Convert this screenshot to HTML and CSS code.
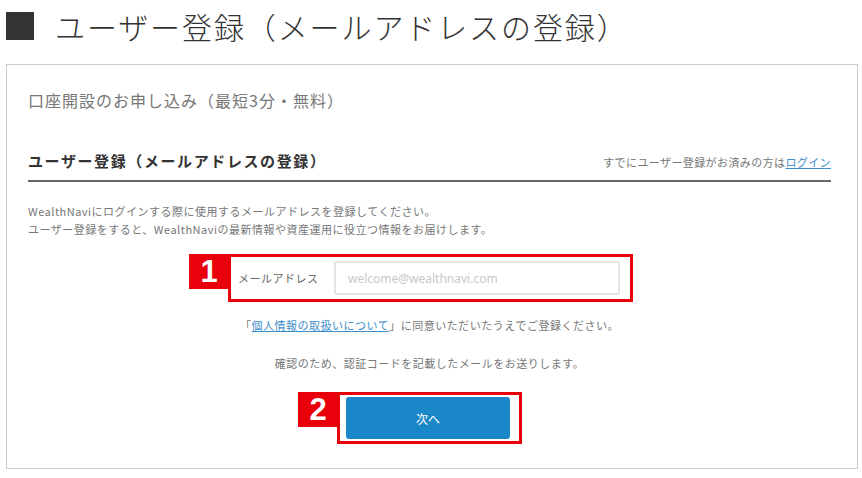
FILE: index.html
```html
<!DOCTYPE html>
<html lang="ja">
<head>
  <meta charset="UTF-8">
  <meta name="viewport" content="width=device-width, initial-scale=1.0">
  <title>ユーザー登録（メールアドレスの登録）</title>
  <link rel="stylesheet" href="styles.css">
</head>
<body>
  <h1 class="page-title"><span class="title-mark"></span>ユーザー登録（メールアドレスの登録）</h1>

  <div class="card">
    <p class="lead">口座開設のお申し込み（最短3分・無料）</p>

    <div class="section-head">
      <h2>ユーザー登録（メールアドレスの登録）</h2>
      <p class="login-note">すでにユーザー登録がお済みの方は<a href="#">ログイン</a></p>
    </div>

    <p class="intro">
      WealthNaviにログインする際に使用するメールアドレスを登録してください。<br>
      ユーザー登録をすると、WealthNaviの最新情報や資産運用に役立つ情報をお届けします。
    </p>

    <form id="signupForm">
      <div class="mark mark-field">
        <span class="badge">1</span>
        <label for="email">メールアドレス</label>
        <input type="email" id="email" placeholder="welcome@wealthnavi.com">
      </div>

      <p class="agree">「<a href="#">個人情報の取扱いについて</a>」に同意いただいたうえでご登録ください。</p>
      <p class="confirm">確認のため、認証コードを記載したメールをお送りします。</p>

      <div class="mark mark-button">
        <span class="badge">2</span>
        <button type="submit">次へ</button>
      </div>
    </form>
  </div>
</body>
</html>
```

FILE: styles.css
```css
body {
  margin: 0;
  font-family: "Noto Sans CJK JP", "Noto Sans", sans-serif;
  background: #fff;
  color: #666;
}
.page-title {
  display: flex;
  align-items: center;
  gap: 21px;
  margin: 0;
  padding: 6px 0 0 6px;
  height: 40px;
  margin-bottom: 18px;
  font-size: 30px;
  font-weight: 300;
  line-height: 40px;
  color: #333;
  letter-spacing: 1.9px;
}
.title-mark {
  width: 28px;
  height: 28px;
  background: #333;
}
.card {
  margin-left: 6px;
  width: 852px;
  box-sizing: border-box;
  border: 1px solid #ccc;
  padding: 23px 26px 24px 21px;
}
.lead {
  margin: 0;
  font-size: 16px;
  line-height: 24px;
  letter-spacing: 1px;
  color: #777;
}
.section-head {
  display: flex;
  justify-content: space-between;
  align-items: flex-end;
  margin-top: 38px;
  padding-bottom: 8px;
  border-bottom: 2px solid #666;
}
.section-head h2 {
  margin: 0;
  font-size: 15px;
  line-height: 22px;
  font-weight: 700;
  letter-spacing: 1.6px;
  color: #333;
}
.login-note {
  margin: 0 0 2px;
  font-size: 11px;
  line-height: 16px;
  letter-spacing: 0.4px;
  color: #777;
}
a {
  color: #3c8dcc;
  text-decoration: underline;
}
.intro {
  margin: 20px 0 0;
  font-size: 11px;
  line-height: 18px;
  letter-spacing: 0.5px;
  color: #777;
}
form {
  display: flex;
  flex-direction: column;
  align-items: center;
}
.mark {
  position: relative;
  border: 3px solid #e8000b;
  display: flex;
  align-items: center;
}
.badge {
  position: absolute;
  left: -42px;
  top: -3px;
  width: 40px;
  height: 35px;
  background: #e8000b;
  color: #fff;
  font-family: "Liberation Sans", Arial, sans-serif;
  font-weight: 700;
  font-size: 31px;
  line-height: 35px;
  text-align: center;
}
.mark-field {
  margin-top: 16px;
  margin-left: 2px;
  width: 405px;
  box-sizing: border-box;
  padding: 4px 10px 4px 7px;
}
.mark-field label {
  width: 96px;
  font-size: 11px;
  letter-spacing: 0.5px;
  color: #666;
}
.mark-field input {
  flex: 1;
  height: 34px;
  box-sizing: border-box;
  border: 2px solid #e4e4e4;
  border-radius: 3px;
  padding: 0 12px;
  font-family: "Noto Sans", sans-serif;
  font-size: 12px;
  color: #333;
}
.mark-field input::placeholder {
  color: #c8c8c8;
}
.agree,
.confirm {
  margin: 14px 0 0;
  font-size: 11px;
  line-height: 18px;
  letter-spacing: 0.5px;
  color: #777;
  text-align: center;
}
.confirm {
  margin-top: 20px;
}
.mark-button {
  margin-top: 20px;
  padding: 2px 9px 2px 6px;
}
.mark-button button {
  width: 164px;
  height: 42px;
  border: none;
  border-radius: 3px;
  background: #1a88c8;
  color: #fff;
  font-family: "Noto Sans CJK JP", sans-serif;
  font-size: 12px;
  cursor: pointer;
}
```
